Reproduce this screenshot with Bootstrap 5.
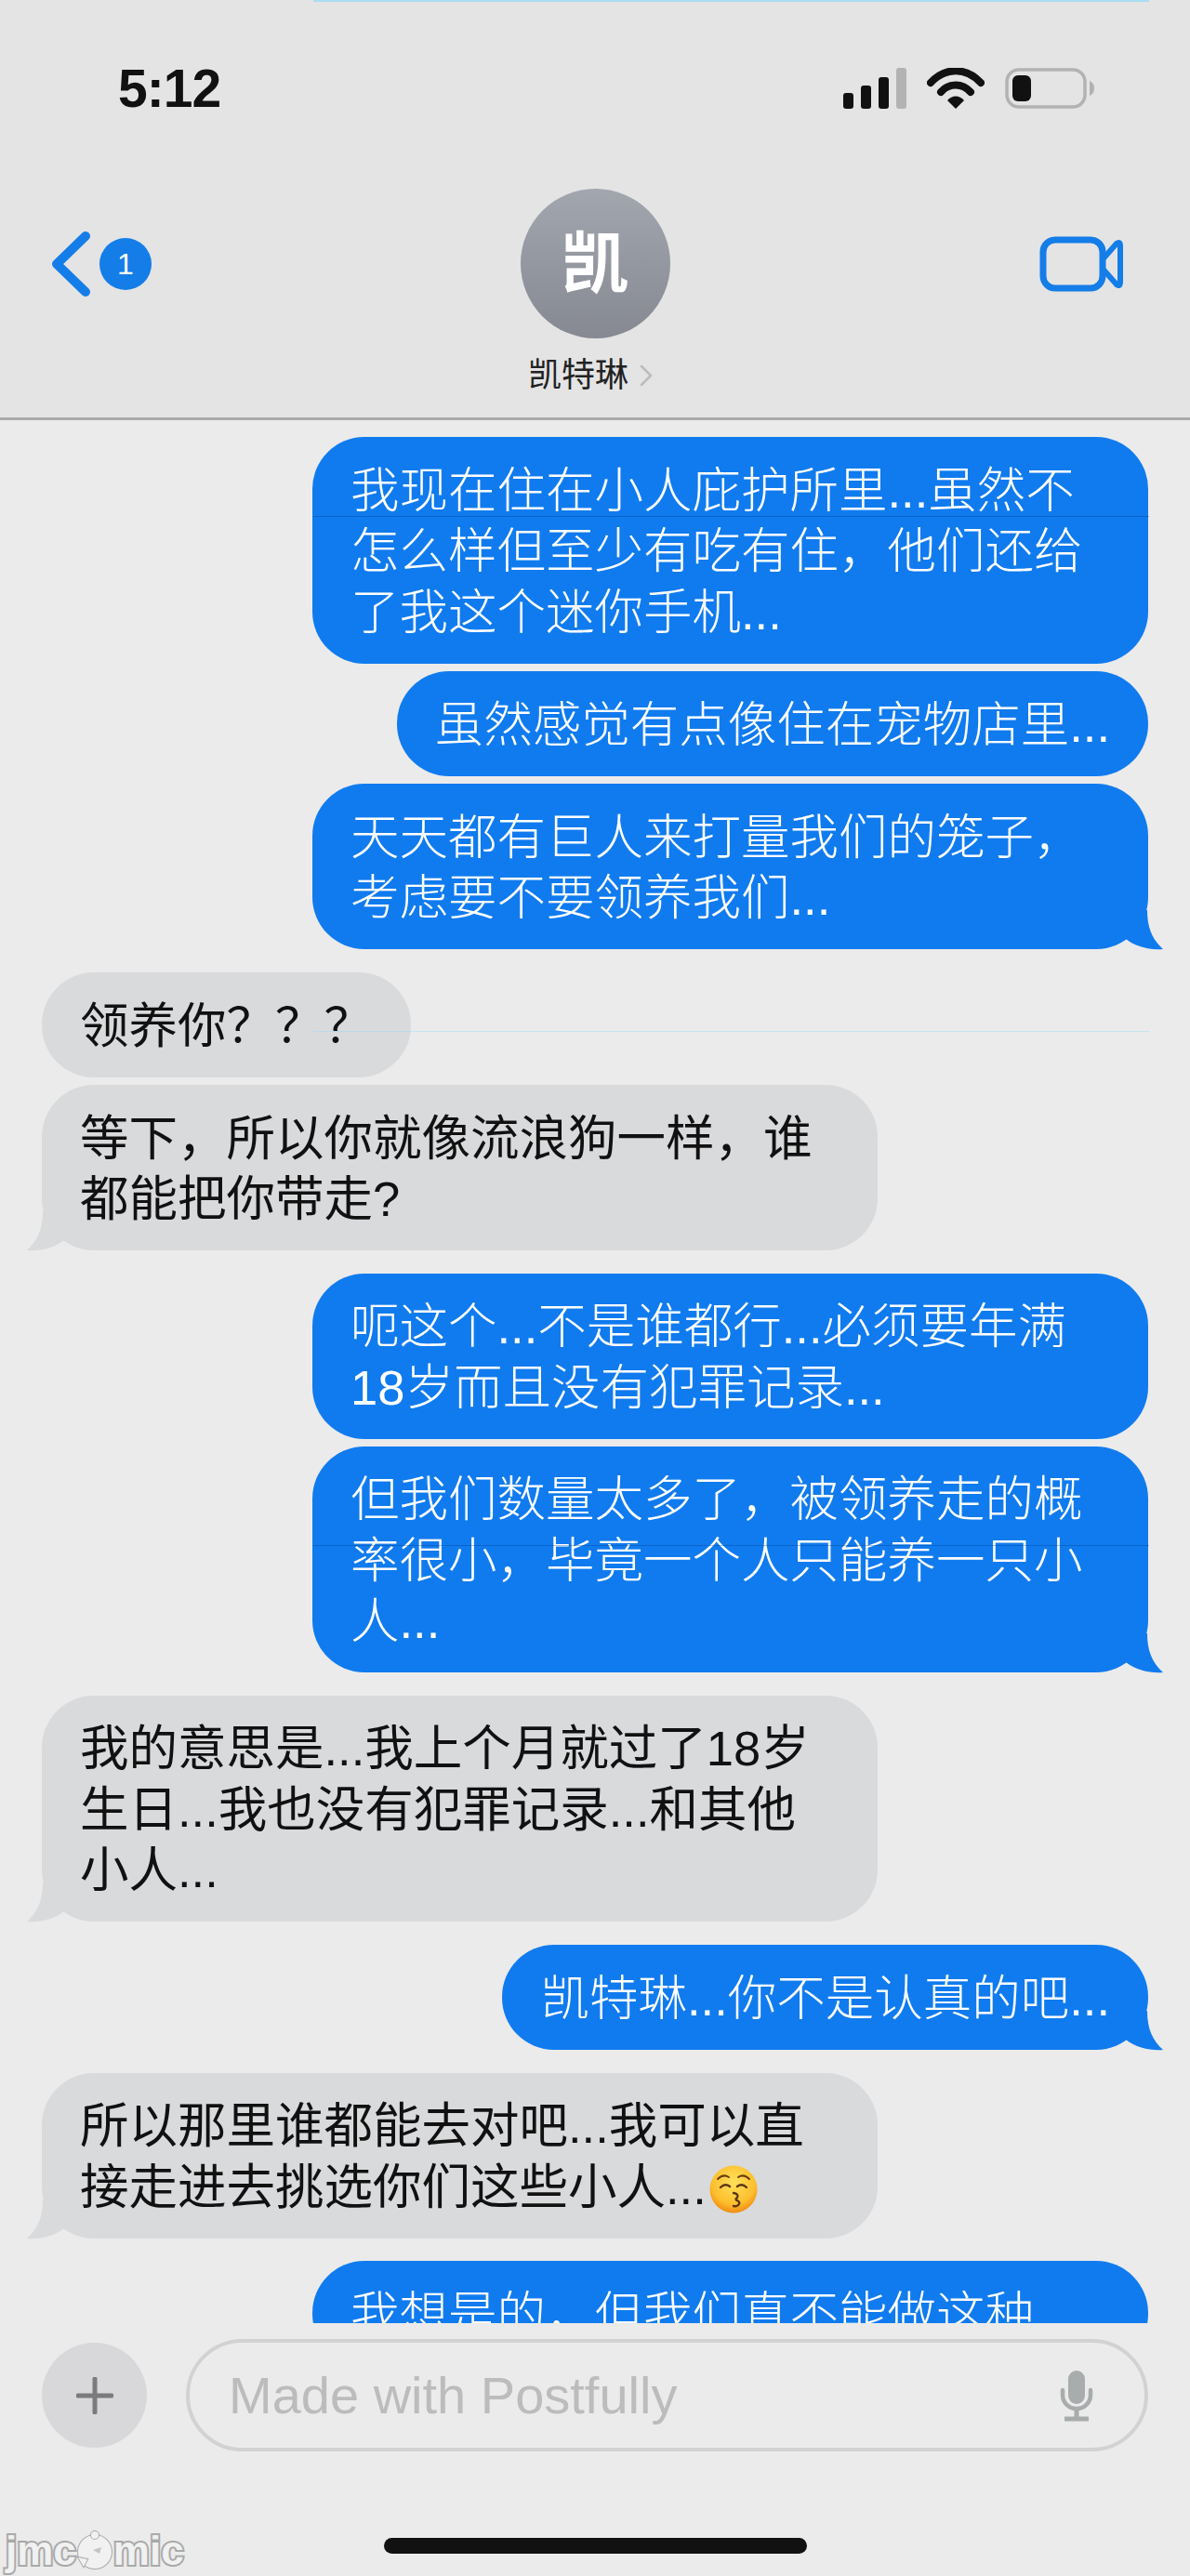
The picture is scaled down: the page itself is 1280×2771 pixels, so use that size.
<!DOCTYPE html>
<html lang="zh-CN">
  <head>
    <meta charset="UTF-8" />
    <meta name="viewport" content="width=device-width, initial-scale=1.0" />
    <title>凯特琳</title>

    <link
      rel="stylesheet"
      href="https://cdn.jsdelivr.net/npm/bootstrap@5.3.0/dist/css/bootstrap.min.css"
    />
    <style>
      body {
        width: 1280px;
        height: 2771px;
        overflow: hidden;
        background: #ebebeb;
        font-family: "Liberation Sans", "Noto Sans CJK SC", sans-serif;
        color: #111;
        position: relative;
      }
      .chat-head {
        height: 452px;
        background: #e4e4e4;
        border-bottom: 3px solid #a9a9a9;
        padding-top: 73px;
        position: relative;
      }
      .status-row {
        height: 44px;
        padding: 0 103px 0 127px;
      }
      .clock {
        font-size: 57px;
        line-height: 44px;
        font-weight: 700;
        color: #111;
        letter-spacing: -1px;
      }
      .status-icons {
        gap: 22px;
      }
      .nav-row {
        display: grid;
        grid-template-columns: 1fr 161px 1fr;
        margin-top: 86px;
      }
      .nav-side {
        height: 161px;
      }
      .back-link {
        padding-left: 55px;
        gap: 8px;
      }
      .count-dot {
        width: 56px;
        height: 56px;
        background: #147de8;
        color: #fff;
        font-size: 32px;
        line-height: 1;
      }
      .video-link {
        padding-right: 72px;
      }
      .avatar-dot {
        width: 161px;
        height: 161px;
        background: linear-gradient(#a2a6af, #868992);
        color: #fff;
        font-size: 72px;
        font-weight: 700;
        line-height: 1;
      }
      .name-row {
        height: 40px;
        margin-top: 20px;
        padding-right: 10px;
        gap: 12px;
        font-size: 36px;
        line-height: 40px;
        color: #222;
        white-space: nowrap;
      }
      .chat-scroll {
        height: 2047px;
        overflow: hidden;
        padding: 18px 45px 0;
        position: relative;
      }
      .bubble {
        position: relative;
        padding: 24.5px 41px 22.5px;
        border-radius: 56px;
        font-size: 52.5px;
        line-height: 65.5px;
        white-space: nowrap;
        width: fit-content;
      }
      .one-line {
        padding-top: 25px;
        padding-bottom: 23px;
      }
      .wide {
        width: 899px;
      }
      .sent {
        background: #107bef;
        color: #fff;
        font-weight: 300;
        margin-left: auto;
      }
      .got {
        background: #d9dadc;
        color: #111;
        font-weight: 400;
      }
      .gap-s {
        margin-top: 8px;
      }
      .gap-l {
        margin-top: 24.5px;
      }
      .tail {
        position: absolute;
        width: 54px;
        height: 44px;
        bottom: -2px;
        right: -17px;
        fill: #107bef;
      }
      .got .tail {
        right: auto;
        left: -17px;
        fill: #d9dadc;
        transform: scaleX(-1);
      }
      .emoji-face {
        width: 52px;
        height: 52px;
        margin-left: 3px;
        vertical-align: -10px;
      }
      .seam {
        position: absolute;
        left: 337px;
        width: 899px;
        height: 1px;
        z-index: 2;
      }
      .seam-dark {
        background: rgba(0, 45, 110, 0.3);
      }
      .seam-cyan {
        background: rgba(130, 215, 255, 0.35);
      }
      .seam-a {
        top: 103px;
      }
      .seam-b {
        top: 1210px;
      }
      .seam-c {
        top: 657px;
      }
      .seam-top {
        position: absolute;
        top: 0;
        left: 337px;
        width: 899px;
        height: 2px;
        background: rgba(130, 215, 255, 0.6);
        z-index: 2;
      }
      .composer {
        margin-top: 17px;
        height: 121px;
        padding: 0 45px;
        gap: 42px;
      }
      .plus-btn {
        width: 113px;
        height: 113px;
        background: #d8d8da;
        border: 0;
        padding: 0;
        flex-shrink: 0;
      }
      .input-pill {
        height: 121px;
        border: 4px solid #d2d2d2;
        padding: 0 55px 0 42px;
      }
      .hint-text {
        font-size: 56px;
        color: #bcbcbc;
        line-height: 1;
        white-space: nowrap;
      }
      .home-bar {
        width: 455px;
        height: 17px;
        margin: 93px auto 0;
        background: #111;
        border-radius: 9px;
      }
      .watermark {
        position: absolute;
        left: 6px;
        bottom: 5px;
        font-size: 44px;
        line-height: 44px;
        font-weight: 700;
        color: #f1f1f1;
        -webkit-text-stroke: 4px #a9a9a9;
        paint-order: stroke fill;
        white-space: nowrap;
      }
      .wm-bird {
        width: 40px;
        height: 44px;
        vertical-align: -6px;
      }
    </style>
  </head>
  <body>
    <div class="seam-top"></div>

    <!-- top bar -->
    <header class="chat-head">
      <div class="status-row d-flex justify-content-between align-items-center">
        <span class="clock">5:12</span>
        <div class="status-icons d-flex align-items-center">
          <svg width="68" height="44" viewBox="0 0 68 44">
            <rect x="0" y="27" width="11" height="17" rx="3" fill="#111" />
            <rect x="19" y="19" width="11" height="25" rx="3" fill="#111" />
            <rect x="38" y="10" width="11" height="34" rx="3" fill="#111" />
            <rect x="57" y="0" width="11" height="44" rx="3" fill="#b3b3b3" />
          </svg>
          <svg width="62" height="44" viewBox="0 0 62 44">
            <path d="M4 16 C20 -1 42 -1 58 16" fill="none" stroke="#111" stroke-width="8" stroke-linecap="round" />
            <path d="M15 26 C24 16 38 16 47 26" fill="none" stroke="#111" stroke-width="8" stroke-linecap="round" />
            <path d="M22 35 C27 29 35 29 40 35 L31 44 Z" fill="#111" />
          </svg>
          <svg width="96" height="44" viewBox="0 0 96 44" class="ms-n1">
            <rect x="2" y="2" width="84" height="40" rx="13" fill="none" stroke="#b2b2b2" stroke-width="3.5" />
            <rect x="8" y="8" width="20" height="28" rx="6" fill="#111" />
            <path d="M91 14 C95 16 96 19 96 22 C96 25 95 28 91 30 Z" fill="#b2b2b2" />
          </svg>
        </div>
      </div>

      <div class="nav-row">
        <div class="nav-side back-link d-flex align-items-center">
          <svg width="44" height="72" viewBox="0 0 44 72">
            <path d="M37 6 L6 36 L37 66" fill="none" stroke="#147de8" stroke-width="10" stroke-linecap="round" stroke-linejoin="round" />
          </svg>
          <span class="count-dot rounded-circle d-flex align-items-center justify-content-center">1</span>
        </div>
        <div class="d-flex flex-column align-items-center">
          <div class="avatar-dot rounded-circle d-flex align-items-center justify-content-center flex-shrink-0">凯</div>
          <div class="name-row d-flex align-items-center">
            <span>凯特琳</span>
            <svg width="14" height="24" viewBox="0 0 14 24">
              <path d="M2 2 L12 12 L2 22" fill="none" stroke="#bcbcbc" stroke-width="2.5" stroke-linecap="round" stroke-linejoin="round" />
            </svg>
          </div>
        </div>
        <div class="nav-side video-link d-flex align-items-center justify-content-end">
          <svg width="90" height="60" viewBox="0 0 90 60">
            <rect x="4" y="4" width="64" height="52" rx="13" fill="none" stroke="#147de8" stroke-width="7" />
            <path d="M68 25 L83 8 Q87 5 87 11 V49 Q87 55 83 52 L68 35" fill="none" stroke="#147de8" stroke-width="6" stroke-linejoin="round" />
          </svg>
        </div>
      </div>
    </header>

    <!-- messages, cut off by the input bar -->
    <main class="chat-scroll">
      <div class="seam seam-dark seam-a"></div>
      <div class="seam seam-dark seam-b"></div>
      <div class="seam seam-cyan seam-c"></div>

      <div class="bubble sent wide">我现在住在小人庇护所里...虽然不<br />怎么样但至少有吃有住，他们还给<br />了我这个迷你手机...</div>
      <div class="bubble sent one-line gap-s">虽然感觉有点像住在宠物店里...</div>
      <div class="bubble sent wide gap-s">
        天天都有巨人来打量我们的笼子，<br />考虑要不要领养我们...
        <svg class="tail" viewBox="0 0 54 44"><path d="M0 0 H36 C36 20 42 32 53 42 C40 43 24 40 13 31 L0 31 Z" /></svg>
      </div>
      <div class="bubble got one-line gap-l">领养你？？？</div>
      <div class="bubble got wide gap-s">
        等下，所以你就像流浪狗一样，谁<br />都能把你带走?
        <svg class="tail" viewBox="0 0 54 44"><path d="M0 0 H36 C36 20 42 32 53 42 C40 43 24 40 13 31 L0 31 Z" /></svg>
      </div>
      <div class="bubble sent wide gap-l">呃这个...不是谁都行...必须要年满<br />18岁而且没有犯罪记录...</div>
      <div class="bubble sent wide gap-s">
        但我们数量太多了，被领养走的概<br />率很小，毕竟一个人只能养一只小<br />人...
        <svg class="tail" viewBox="0 0 54 44"><path d="M0 0 H36 C36 20 42 32 53 42 C40 43 24 40 13 31 L0 31 Z" /></svg>
      </div>
      <div class="bubble got wide gap-l">
        我的意思是...我上个月就过了18岁<br />生日...我也没有犯罪记录...和其他<br />小人...
        <svg class="tail" viewBox="0 0 54 44"><path d="M0 0 H36 C36 20 42 32 53 42 C40 43 24 40 13 31 L0 31 Z" /></svg>
      </div>
      <div class="bubble sent one-line gap-l">
        凯特琳...你不是认真的吧...
        <svg class="tail" viewBox="0 0 54 44"><path d="M0 0 H36 C36 20 42 32 53 42 C40 43 24 40 13 31 L0 31 Z" /></svg>
      </div>
      <div class="bubble got wide gap-l">
        所以那里谁都能去对吧...我可以直<br />接走进去挑选你们这些小人...<svg class="emoji-face" viewBox="0 0 52 52">
          <defs>
            <radialGradient id="faceFill" cx="50%" cy="35%" r="65%">
              <stop offset="0%" stop-color="#ffe15a" />
              <stop offset="70%" stop-color="#fdbf2e" />
              <stop offset="100%" stop-color="#f08c12" />
            </radialGradient>
          </defs>
          <circle cx="26" cy="26" r="25.5" fill="url(#faceFill)" />
          <path d="M9 15 Q15 9 21 13 M31 13 Q37 9 43 15" fill="none" stroke="#6b3f10" stroke-width="2" stroke-linecap="round" />
          <path d="M12 24 Q17 19 22 23 M30 23 Q35 19 40 24" fill="none" stroke="#5b3710" stroke-width="2.4" stroke-linecap="round" />
          <path d="M26 30 Q32 31 30 35 Q27 37 30 38 Q34 40 31 43 Q29 45 26 44" fill="none" stroke="#5b3710" stroke-width="2.4" stroke-linecap="round" />
        </svg>
        <svg class="tail" viewBox="0 0 54 44"><path d="M0 0 H36 C36 20 42 32 53 42 C40 43 24 40 13 31 L0 31 Z" /></svg>
      </div>
      <div class="bubble sent wide gap-l">我想是的，但我们真不能做这种</div>
    </main>

    <!-- input bar -->
    <div class="composer d-flex align-items-center">
      <button type="button" class="plus-btn btn rounded-circle d-flex align-items-center justify-content-center">
        <svg width="40" height="40" viewBox="0 0 40 40">
          <path d="M20 2 V38 M2 20 H38" stroke="#7b7b7d" stroke-width="5" stroke-linecap="round" />
        </svg>
      </button>
      <div class="input-pill rounded-pill flex-grow-1 d-flex align-items-center justify-content-between">
        <span class="hint-text">Made with Postfully</span>
        <svg width="36" height="56" viewBox="0 0 36 56">
          <rect x="9" y="1" width="18" height="36" rx="9" fill="#a9acac" />
          <path d="M3 22 V27 C3 36 10 42 18 42 C26 42 33 36 33 27 V22" fill="none" stroke="#a9acac" stroke-width="4.5" stroke-linecap="round" />
          <path d="M18 42 V52 M5 53 H31" fill="none" stroke="#a9acac" stroke-width="5" />
        </svg>
      </div>
    </div>

    <div class="home-bar"></div>

    <div class="watermark">jmc<svg class="wm-bird" viewBox="0 0 40 44">
        <circle cx="20" cy="24" r="18" fill="#f1f1f1" stroke="#a9a9a9" stroke-width="2" />
        <circle cx="20" cy="6" r="4" fill="#f1f1f1" stroke="#a9a9a9" stroke-width="2" />
        <path d="M18 22 L27 19 L25 26 Z" fill="#c4c4c4" />
        <path d="M2 30 L12 32 L8 40 Z" fill="#f1f1f1" stroke="#a9a9a9" stroke-width="2" />
      </svg>mic</div>

    <script src="https://cdn.jsdelivr.net/npm/bootstrap@5.3.0/dist/js/bootstrap.bundle.min.js"></script>
  </body>
</html>
